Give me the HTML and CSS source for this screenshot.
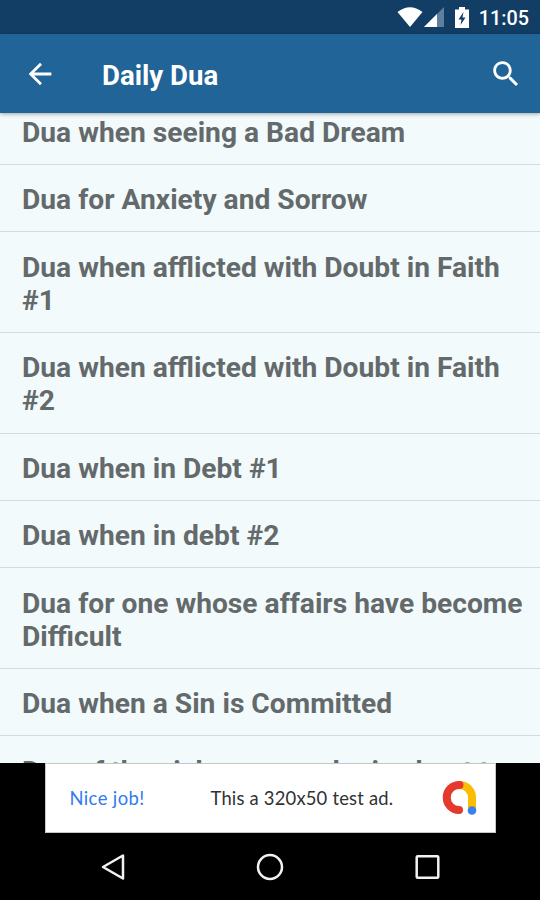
FILE: index.html
```
<!DOCTYPE html>
<html lang="en">
<head>
    <meta charset="UTF-8">
    <meta name="viewport" content="width=device-width, initial-scale=1.0">
    <title>Daily Dua</title>
    <link rel="stylesheet" href="styles.css">
</head>
<body>
    <div class="status-bar">
        <svg class="wifi" width="26" height="20" viewBox="0 0 26 20">
            <path d="M0.500 5Q13-4.500 25.500 5L13 20z" fill="#fff"/>
        </svg>
        <svg class="signal" width="20" height="20" viewBox="0 0 20 20">
            <path d="M0 20L20 0V20z" fill="#5f7f9f"/>
            <path d="M0 20L13 7V20z" fill="#fff"/>
        </svg>
        <svg class="battery" width="14" height="21" viewBox="0 0 14 21">
            <path d="M4 0h6v2.500h4V21H0V2.500h4z" fill="#fff"/>
            <path d="M8.500 5L3.500 12.500h3L5.500 18l5-7.500h-3z" fill="#123e66"/>
        </svg>
        <span class="clock">11:05</span>
    </div>

    <header class="toolbar">
        <svg class="back" width="34" height="34" viewBox="0 0 24 24">
            <path d="M20 11H7.830l5.590-5.590L12 4l-8 8 8 8 1.410-1.410L7.830 13H20v-2z" fill="#fff"/>
        </svg>
        <h1>Daily Dua</h1>
        <svg class="search" width="34" height="34" viewBox="0 0 24 24">
            <path d="M15.500 14h-.79l-.28-.27C15.410 12.590 16 11.110 16 9.500 16 5.910 13.090 3 9.500 3S3 5.910 3 9.500 5.910 16 9.500 16c1.610 0 3.090-.59 4.230-1.570l.27.28v.79l5 4.990L20.490 19l-4.990-5zm-6 0C7.010 14 5 11.990 5 9.500S7.010 5 9.500 5 14 7.010 14 9.500 11.990 14 9.500 14z" fill="#fff"/>
        </svg>
    </header>

    <main class="content">
        <ul class="dua-list">
            <li>Dua when seeing a Bad Dream</li>
            <li>Dua for Anxiety and Sorrow</li>
            <li>Dua when afflicted with Doubt in Faith #1</li>
            <li>Dua when afflicted with Doubt in Faith #2</li>
            <li>Dua when in Debt #1</li>
            <li>Dua when in debt #2</li>
            <li>Dua for one whose affairs have become Difficult</li>
            <li>Dua when a Sin is Committed</li>
            <li>Dua of the sick person who is about to</li>
        </ul>
    </main>

    <div class="ad-area">
        <div class="ad">
            <span class="ad-praise">Nice job!</span>
            <span class="ad-text">This a 320x50 test ad.</span>
            <svg class="ad-logo" width="36" height="36" viewBox="0 0 36 36" fill="none" stroke-width="8" stroke-linecap="round">
                <path d="M18 5A12.500 12.500 0 0 1 30 18V29" stroke="#fbbc04"/>
                <path d="M17.500 5A12.500 12.500 0 0 0 17 30" stroke="#e6392d"/>
                <circle cx="30" cy="30.500" r="4.300" fill="#3a80ee"/>
            </svg>
        </div>
    </div>

    <nav class="nav-bar">
        <svg width="30" height="30" viewBox="0 0 30 30">
            <path d="M25 3.500V26.500L5 15z"/>
        </svg>
        <svg width="30" height="30" viewBox="0 0 30 30">
            <circle cx="15" cy="15" r="12"/>
        </svg>
        <svg width="30" height="30" viewBox="0 0 30 30">
            <rect x="4.700" y="4.200" width="21.600" height="21.600" rx="1"/>
        </svg>
    </nav>
</body>
</html>
```

FILE: styles.css
```
* {
    box-sizing: border-box;
}
body {
    font-family: Roboto, sans-serif;
    margin: 0;
    height: 900px;
    display: flex;
    flex-direction: column;
    background-color: #000;
    overflow: hidden;
}
.status-bar {
    flex: none;
    display: flex;
    justify-content: flex-end;
    align-items: center;
    height: 34px;
    padding-right: 11px;
    background-color: #123e66;
    color: #fff;
}
.signal {
    margin-left: 1px;
}
.battery {
    margin-left: 11px;
}
.clock {
    margin-left: 10px;
    padding-top: 3px;
    font-size: 19.800px;
    font-weight: 500;
    line-height: 24px;
}
.toolbar {
    flex: none;
    display: flex;
    align-items: center;
    height: 79px;
    padding: 0 17px 0 23px;
    background-color: #216497;
    color: #fff;
    box-shadow: 0 1px 4px rgba(0, 0, 0, 0.35);
    z-index: 1;
}
.toolbar h1 {
    flex: 1;
    margin: 4px 0 0 45px;
    font-size: 27.600px;
    font-weight: bold;
    line-height: 34px;
}
.content {
    flex: none;
    height: 650px;
    background-color: #f2fafc;
    overflow: hidden;
}
.dua-list {
    list-style: none;
    margin: -15.400px 0 0;
    padding: 0;
}
.dua-list li {
    padding: 18.200px 16px 15px 22px;
    border-bottom: 1px solid #d5dbdd;
    color: #646a6b;
    font-size: 28.200px;
    font-weight: bold;
    line-height: 33.200px;
}
.ad-area {
    flex: none;
    display: flex;
    justify-content: center;
    height: 70px;
}
.ad {
    display: flex;
    align-items: center;
    width: 451px;
    padding: 0 17px 0 24px;
    background-color: #fff;
    border: 1px solid #c4c8c8;
    font-family: Lato, sans-serif;
    font-size: 18.400px;
    letter-spacing: 0.200px;
}
.ad-praise {
    width: 141px;
    color: #2f7bf0;
    letter-spacing: 0.400px;
}
.ad-text {
    flex: 1;
    color: #303234;
}
.nav-bar {
    flex: 1;
    display: flex;
    justify-content: center;
    align-items: center;
    gap: 127px;
}
.nav-bar svg {
    fill: none;
    stroke: #f2f2f2;
    stroke-width: 2.500;
    stroke-linejoin: round;
}
```
